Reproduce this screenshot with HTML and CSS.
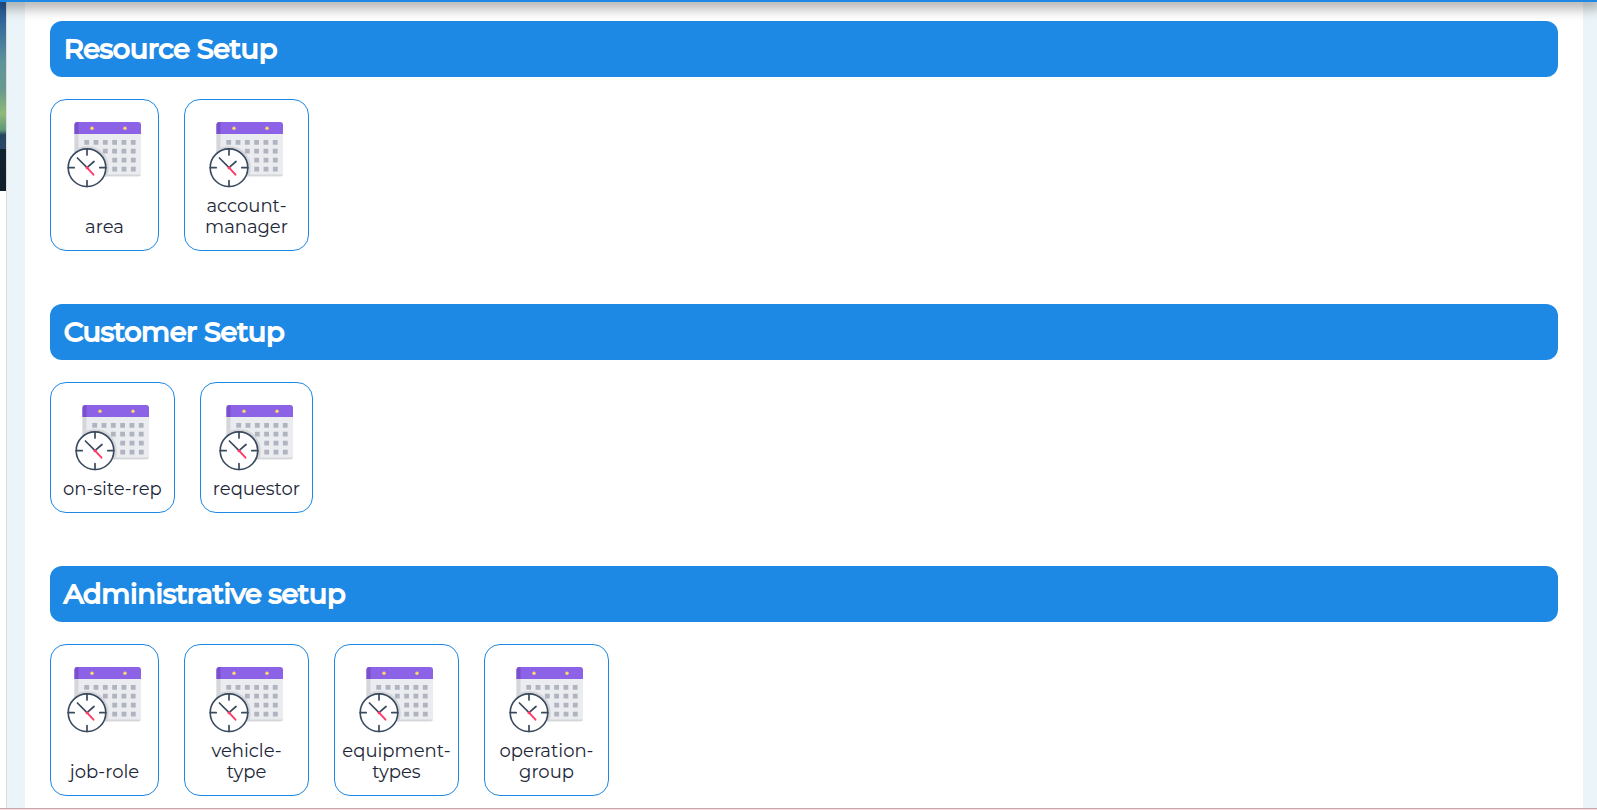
FILE: index.html
```html
<!DOCTYPE html>
<html lang="en">
<head>
  <meta charset="UTF-8">
  <title>Setup</title>
  <meta name="viewport" content="width=device-width, initial-scale=1.0">
  <link rel="stylesheet" href="styles.css">
</head>
<body>
  <svg class="sprite" aria-hidden="true">
    <symbol id="calendar" viewBox="0 0 83 84">
      <clipPath id="page"><rect x="11.5" y="10" width="66.5" height="54.5" rx="3"/></clipPath>
      <g clip-path="url(#page)">
        <rect x="11" y="10" width="67" height="55" fill="#ebecef"/>
        <rect x="11" y="62.5" width="67" height="2" fill="#d5d6da"/>
        <rect x="11" y="22" width="4.5" height="43" fill="#d5d6da"/>
        <rect x="11" y="10" width="67" height="12" fill="#8c63e6"/>
        <rect x="11" y="10" width="4.5" height="12" fill="#7a50cc"/>
        <path d="M21.3 30.3h55M39.9 39.2h36M49.3 48.1h27M49.3 57.1h27" stroke="#afb4c0" stroke-width="4.8" stroke-dasharray="4.8 4.5"/>
        <circle cx="24" cy="55.7" r="21.8" fill="#d5d6da"/>
      </g>
      <circle cx="29" cy="16.3" r="1.7" fill="#ffd769"/>
      <circle cx="62" cy="16.3" r="1.7" fill="#ffd769"/>
      <circle cx="24" cy="55.7" r="18.8" fill="#fff" stroke="#3a4a5f" stroke-width="1.6"/>
      <path d="M24 37v6M24 68.5v6M5.2 55.7h6M36.8 55.7h6M14.4 46L24 55.7l7-6.2" fill="none" stroke="#3a4a5f" stroke-width="1.7" stroke-linecap="round"/>
      <path d="M24 55.7l6.5 7" stroke="#ff3a69" stroke-width="1.9" stroke-linecap="round"/>
      <circle cx="24" cy="55.7" r="1.5" fill="#ff3a69"/>
    </symbol>
  </svg>

  <header class="topbar"></header>

  <div class="layout">
    <aside class="sidebar">
      <div class="cover"></div>
    </aside>

    <main class="content">
      <div class="panel">
        <section class="group">
          <h2 class="title">Resource Setup</h2>
          <div class="cards">
            <a class="card" href="#area"><svg class="icon"><use href="#calendar"/></svg><span>area</span></a>
            <a class="card" href="#account-manager"><svg class="icon"><use href="#calendar"/></svg><span>account-manager</span></a>
          </div>
        </section>

        <section class="group">
          <h2 class="title">Customer Setup</h2>
          <div class="cards">
            <a class="card" href="#on-site-rep"><svg class="icon"><use href="#calendar"/></svg><span>on-site-rep</span></a>
            <a class="card" href="#requestor"><svg class="icon"><use href="#calendar"/></svg><span>requestor</span></a>
          </div>
        </section>

        <section class="group">
          <h2 class="title">Administrative setup</h2>
          <div class="cards">
            <a class="card" href="#job-role"><svg class="icon"><use href="#calendar"/></svg><span>job-role</span></a>
            <a class="card" href="#vehicle-type"><svg class="icon"><use href="#calendar"/></svg><span>vehicle-type</span></a>
            <a class="card" href="#equipment-types"><svg class="icon"><use href="#calendar"/></svg><span>equipment-types</span></a>
            <a class="card" href="#operation-group"><svg class="icon"><use href="#calendar"/></svg><span>operation-group</span></a>
          </div>
        </section>
      </div>
    </main>
  </div>

  <footer class="bottombar"></footer>
</body>
</html>
```
FILE: styles.css
```css
* {
  box-sizing: border-box;
}

body {
  margin: 0;
  height: 100vh;
  display: flex;
  flex-direction: column;
  overflow: hidden;
  font-family: Montserrat, Inter, sans-serif;
  color: #1c2737;
  background: #fff;
}

.sprite {
  position: absolute;
  width: 0;
  height: 0;
}

.topbar {
  position: relative;
  flex: none;
  height: 2px;
  background: #1e88e5;
  box-shadow: 0 0 14px 5px rgba(0, 0, 0, 0.4);
}

.layout {
  flex: 1;
  min-height: 0;
  display: flex;
}

.sidebar {
  flex: none;
  width: 7px;
  border-right: 1px solid #dcdcdc;
}

.cover {
  height: 189px;
  background: linear-gradient(#285b97 0, #33679b 20px, #5f939a 60px, #6a9a8c 88px, #91b978 112px, #5f9878 128px, #24445f 133px, #2b4a69 147px, #12222e 147px, #101f2a 100%);
}

.content {
  flex: 1;
  min-width: 0;
  padding: 0 14px 0 18px;
  background: #ebf4f8;
  overflow: hidden;
}

.panel {
  min-height: 100%;
  padding: 19px 25px;
  background: #fff;
}

.group {
  margin-bottom: 53px;
}

.title {
  margin: 0 0 22px;
  padding: 0 14px;
  font-size: 27px;
  font-weight: 400;
  line-height: 56px;
  color: #fff;
  -webkit-text-stroke: 2px #fff;
  background: #1e88e5;
  border-radius: 12px;
}

.cards {
  display: flex;
  flex-wrap: wrap;
  gap: 25px;
}

.card {
  display: flex;
  flex-direction: column;
  align-items: center;
  justify-content: space-between;
  min-width: 109px;
  max-width: 125px;
  padding: 12px;
  border: 1px solid #1e88e5;
  border-radius: 16px;
  font-size: 18px;
  line-height: 21px;
  text-align: center;
  text-decoration: none;
  color: inherit;
}

.icon {
  width: 83px;
  height: 84px;
}

.bottombar {
  flex: none;
  height: 2px;
  background: #fbdfe2;
  border-top: 1px solid #c6a4a8;
}
```
